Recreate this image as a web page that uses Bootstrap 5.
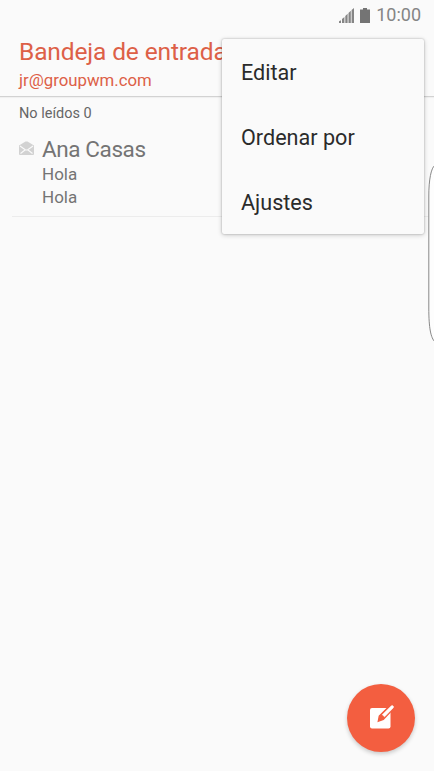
<!DOCTYPE html>
<html lang="es">
<head>
<meta charset="utf-8">
<meta name="viewport" content="width=device-width, initial-scale=1">
<title>Bandeja de entrada</title>
<link href="https://cdn.jsdelivr.net/npm/bootstrap@5.3.0/dist/css/bootstrap.min.css" rel="stylesheet">
<style>
body{font-family:Roboto,"Liberation Sans",sans-serif;background:#fafafa;color:#747474}
.screen{width:434px;height:771px;background:#fafafa}
.status{height:30px;padding:0 13px 0 0;font-size:18px;line-height:30px;color:#858585}
.sig{margin-right:6px}
.bat{margin-right:6px}
.mail-head{height:97px;margin-top:-30px;padding:38px 19px 0;border-bottom:1px solid #d2d2d2;color:#dd6047;box-shadow:0 1px 1px #0000000a}
.mail-head h1{font-size:24.5px;line-height:28px;font-weight:400;white-space:nowrap;letter-spacing:-.13px}
.mail-head p{font-size:16.8px;line-height:22px;margin-top:3px}
.unread{height:36px;padding:6px 19px 0;font-size:14.5px;line-height:22px;color:#666}
.mail-row{height:84px;margin-left:12px;padding:3px 0 0 7px;border-bottom:1px solid #ececec}
.mail-row .env{margin:5px 8px 0 0}
.sender{font-size:22.5px;line-height:26px;letter-spacing:-.4px;margin-bottom:1px}
.snip{font-size:17px;line-height:23px}
.popup{left:222px;top:39px;width:202px;height:195px;background:#fafafa;border-radius:2px;box-shadow:0 0 2px #0004,0 1px 5px #0003;z-index:3}
.popup .entry{height:65px;padding:1px 0 0 19px;font-size:21.6px;line-height:65px;color:#2b2b2b;text-decoration:none}
.edge{left:428px;top:164px;z-index:2}
.fab{left:347px;top:684px;width:68px;height:68px;background:#f35e40;box-shadow:0 2px 4px #0003}
.fab svg{margin-bottom:2px}
</style>
<script src="https://cdn.jsdelivr.net/npm/bootstrap@5.3.0/dist/js/bootstrap.bundle.min.js"></script>
</head>
<body>
<div class="screen position-relative overflow-hidden">
  <div class="status d-flex justify-content-end align-items-center">
    <svg class="sig" width="15" height="15" viewBox="0 0 15 15" fill="#858585"><path d="M0 13.3l2-1V15H0zM3 11l2.4-2V15H3zM6.3 8l2.3-2.200V15H6.300zM9.500 5l2.300-2.200V15H9.500zM12.600 2L15 0v15h-2.400z"/></svg>
    <svg class="bat" width="10" height="15" viewBox="0 0 10 15" fill="#747474"><path d="M3 0h4v1.500h3V15H0V1.500h3z"/></svg>
    <span class="clock">10:00</span>
  </div>
  <header class="mail-head">
    <h1 class="mb-0"><span>Bandeja de entrada</span></h1>
    <p class="mb-0"><span>jr@groupwm.com</span></p>
  </header>
  <main>
    <div class="unread"><span>No leídos 0</span></div>
    <div class="mail-row d-flex align-items-start">
      <svg class="env flex-shrink-0" width="15" height="15" viewBox="0 0 15 15"><path d="M0 4.500L6.500.5h2L15 4.500V13q0 1-1 1H1q-1 0-1-1z" fill="#d2d2d2"/><path d="M1 5l5.500 4h2L14 5M1.500 12.500L6 9M13.500 12.500L9 9" fill="none" stroke="#fafafa" stroke-width="1.100"/></svg>
      <div>
        <div class="sender">Ana Casas</div>
        <div class="snip">Hola</div>
        <div class="snip">Hola</div>
      </div>
    </div>
  </main>
  <svg class="edge position-absolute" width="6" height="180" viewBox="0 0 6 180"><path d="M7 1C3 4 .8 16 .8 32v112c0 20 2 30 6.200 34" fill="#fdfdfd" stroke="#888"/></svg>
  <nav class="popup position-absolute d-flex flex-column">
    <a class="entry" href="#">Editar</a>
    <a class="entry" href="#">Ordenar por</a>
    <a class="entry" href="#">Ajustes</a>
  </nav>
  <button class="fab btn border-0 rounded-circle position-absolute p-0 d-flex align-items-center justify-content-center" aria-label="Redactar">
    <svg width="26" height="26" viewBox="0 0 26 26"><rect x="2" y="4" width="20.500" height="20.500" rx="2" fill="#fff"/><path d="M10.300 17.300l1-5.300L23 .5 26 4 15.300 15.500z" fill="#f35e40" stroke="#f35e40" stroke-width="1.400"/><path d="M14.300 10.700L23.200 2q1-.9 1.900 0t0 1.900L16.600 12.800z" fill="#fff" stroke="#fff" stroke-width=".6"/></svg>
  </button>
</div>
</body>
</html>
